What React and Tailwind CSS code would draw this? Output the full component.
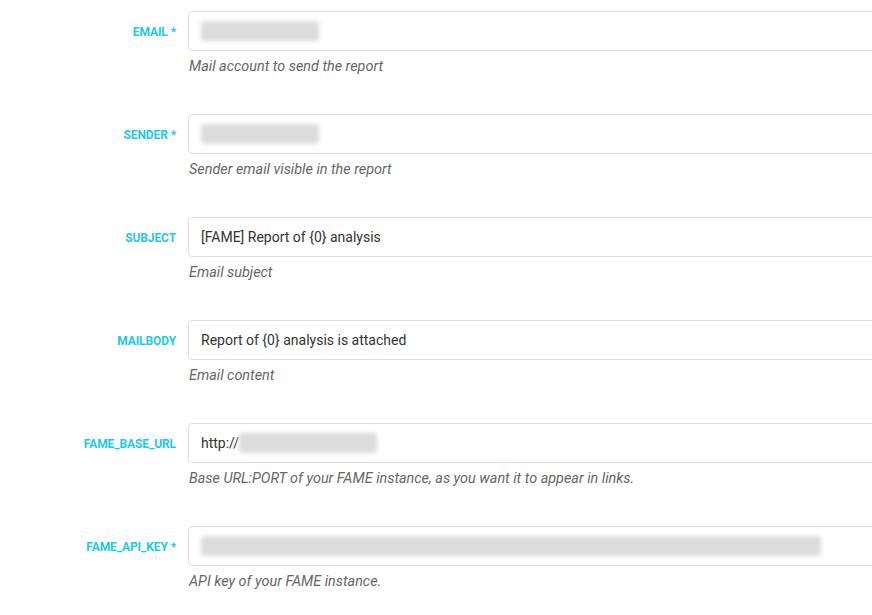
import React from "react";

const fields = [
  { label: "EMAIL *", blur: 118, help: "Mail account to send the report" },
  { label: "SENDER *", blur: 118, help: "Sender email visible in the report" },
  { label: "SUBJECT", value: "[FAME] Report of {0} analysis", help: "Email subject" },
  { label: "MAILBODY", value: "Report of {0} analysis is attached", help: "Email content" },
  {
    label: "FAME_BASE_URL",
    value: "http://",
    blur: 138,
    help: "Base URL:PORT of your FAME instance, as you want it to appear in links.",
  },
  { label: "FAME_API_KEY *", blur: 620, help: "API key of your FAME instance." },
];

const Field = ({ field }) => {
  return (
    <div className="flex items-start h-[103px]">
      <div className="w-[176px] shrink-0 h-[41px] flex items-center justify-end text-[12px] font-bold text-[#1ec8e8] tracking-[-0.1px]">
        {field.label}
      </div>
      <div className="ml-[12px] shrink-0">
        <div className="w-[720px] h-[40px] border border-[#dedede] rounded-[4px] bg-white flex items-center pl-[12px] text-[14px] text-[#333]">
          {field.value && <span>{field.value}</span>}
          {field.blur && (
            <span
              className="h-[20px] shrink-0 bg-[#dcdcdc] blur-[2px] rounded-sm"
              style={{ width: field.blur }}
            ></span>
          )}
        </div>
        <div className="mt-[6px] pl-[1px] text-[14.4px] italic text-[#666] leading-[20px]">
          {field.help}
        </div>
      </div>
    </div>
  );
};

const App = () => {
  return (
    <div
      className="w-[872px] h-[615px] overflow-hidden bg-white pt-[11px]"
      style={{ fontFamily: "Roboto, 'Liberation Sans', sans-serif" }}
    >
      {fields.map((f) => (
        <Field key={f.label} field={f} />
      ))}
    </div>
  );
};

export default App;
